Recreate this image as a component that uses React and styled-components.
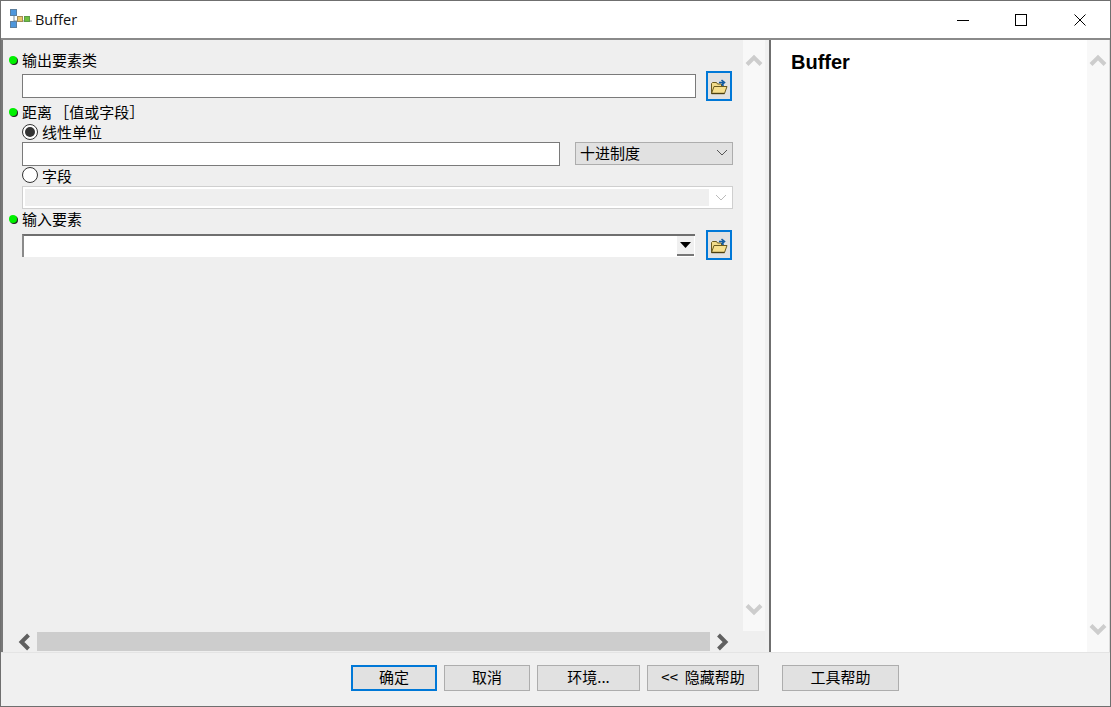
import React from 'react'
import styled, { createGlobalStyle } from 'styled-components'

const GlobalStyle = createGlobalStyle`
   html, body {
      margin: 0;
      padding: 0;
      background: #fff;
   }
   * {
      box-sizing: border-box;
   }
`

const cjk = `"Noto Sans CJK SC", "Noto Sans", sans-serif`

const Window = styled.div`
   width: 1111px;
   height: 707px;
   display: flex;
   flex-direction: column;
   background: #f0f0f0;
   border: 1px solid #6f6f6f;
   overflow: hidden;
   font-family: ${cjk};
   font-size: 15px;
   color: #000;
`

const TitleBar = styled.div`
   height: 37px;
   flex: none;
   display: flex;
   align-items: center;
   padding-left: 9px;
   background: #fff;
`

const TitleText = styled.span`
   margin-left: 3px;
   font-family: "Open Sans", "Noto Sans", sans-serif;
   font-size: 14.5px;
   color: #111;
   flex: 1;
`

const WinButton = styled.div`
   width: 58px;
   height: 37px;
   display: flex;
   align-items: center;
   justify-content: center;
   &:last-child {
      width: 59px;
      margin-right: 1px;
   }
`

const Main = styled.div`
   height: 615px;
   flex: none;
   display: flex;
   border-top: 2px solid #8a8a8a;
   border-bottom: 1px solid #e4e4e4;
   background: #f0f0f0;
`

const LeftPane = styled.div`
   width: 764px;
   flex: none;
   display: flex;
   flex-direction: column;
   border-left: 2px solid #777;
   background: #efefef;
`

const LeftTop = styled.div`
   flex: 1;
   display: flex;
   min-height: 0;
`

const Form = styled.div`
   flex: 1;
   padding: 11px 10px 0 6px;
`

const LabelRow = styled.div`
   height: 20px;
   display: flex;
   align-items: center;
   margin-top: ${p => p.$top || 0}px;
   padding-bottom: 2px;
   line-height: 20px;
   white-space: pre;
   word-spacing: -1px;
`

const Dot = styled.span`
   width: 8px;
   height: 8px;
   margin-right: 5px;
   margin-top: -1px;
   flex: none;
   border-radius: 50%;
   background: #00f000;
   box-shadow: 1px 1px 0 #222;
`

const FieldRow = styled.div`
   height: ${p => p.$h || 30}px;
   margin-left: 13px;
   display: flex;
   align-items: center;
`

const TextInput = styled.input`
   width: ${p => p.$w}px;
   height: 24px;
   flex: none;
   padding: 0 3px;
   background: #fff;
   border: 1px solid #7a7a7a;
   border-radius: 0;
   outline: none;
`

const Browse = styled.div`
   width: 26px;
   height: 30px;
   margin-left: ${p => p.$left || 10}px;
   flex: none;
   display: flex;
   align-items: center;
   justify-content: center;
   background: #e1e1e1;
   border: 2px solid #0078d7;
`

const RadioRow = styled.div`
   height: ${p => p.$h}px;
   margin-left: 13px;
   padding-bottom: 2px;
   display: flex;
   align-items: center;
   gap: 4px;
`

const RadioMark = styled.span`
   width: 16px;
   height: 16px;
   flex: none;
   display: flex;
   align-items: center;
   justify-content: center;
   border: 1px solid #333;
   border-radius: 50%;
   background: #fff;
   &::after {
      content: '';
      display: ${p => (p.$on ? 'block' : 'none')};
      width: 10px;
      height: 10px;
      border-radius: 50%;
      background: #333;
   }
`

const UnitSelect = styled.div`
   width: 158px;
   height: 23px;
   margin: 0 0 1px 15px;
   padding: 0 4px 2px 4px;
   display: flex;
   align-items: center;
   justify-content: space-between;
   background: #e1e1e1;
   border: 1px solid #adadad;
`

const DisabledSelect = styled.div`
   width: 711px;
   height: 23px;
   margin-left: 13px;
   padding: 2px 0 2px 2px;
   display: flex;
   align-items: stretch;
   background: #fff;
   border: 1px solid #cfcfcf;
`

const DisabledFill = styled.div`
   flex: 1;
   background: #efefef;
`

const DisabledArrow = styled.div`
   width: 23px;
   display: flex;
   align-items: center;
   justify-content: center;
`

const Combo = styled.div`
   width: 673px;
   height: 23px;
   flex: none;
   display: flex;
   justify-content: flex-end;
   background: #fff;
   border-top: 2px solid #6f6f6f;
   border-left: 2px solid #8a8a8a;
`

const ComboArrow = styled.div`
   width: 17px;
   height: 20px;
   margin-right: 1px;
   display: flex;
   align-items: center;
   justify-content: center;
   background: #f0f0f0;
   border-bottom: 2px solid #777;
`

const VScroll = styled.div`
   width: ${p => p.$w}px;
   flex: none;
   padding: ${p => p.$pad};
   display: flex;
   flex-direction: column;
   justify-content: space-between;
   align-items: center;
   background: #f8f8f8;
`

const HScroll = styled.div`
   height: 21px;
   flex: none;
   padding: 0 32px 0 11px;
   display: flex;
   align-items: center;
   gap: 5px;
   background: #efefef;
`

const HThumb = styled.div`
   flex: 1;
   height: 19px;
   background: #cdcdcd;
`

const RightPane = styled.div`
   flex: 1;
   display: flex;
   margin-left: 4px;
   border-left: 2px solid #6f6f6f;
   border-right: 1px solid #dcdcdc;
`

const HelpBody = styled.div`
   flex: 1;
   padding: 10px 20px;
   background: #fff;
`

const HelpTitle = styled.h1`
   margin: 0;
   font-family: "Liberation Sans", Arial, sans-serif;
   font-size: 20px;
   font-weight: 700;
   line-height: 24px;
`

const Footer = styled.div`
   flex: 1;
   padding: 12px 0 0 350px;
   display: flex;
   gap: 7px;
   background: #f0f0f0;
`

const Button = styled.div`
   width: ${p => p.$w}px;
   height: 26px;
   margin-left: ${p => p.$left || 0}px;
   padding-bottom: 4px;
   display: flex;
   align-items: center;
   justify-content: center;
   background: #e1e1e1;
   border: ${p => (p.$primary ? '2px solid #0078d7' : '1px solid #adadad')};
   white-space: pre;
`

function AppIcon() {
   return (
      <svg width="22" height="22" viewBox="0 0 22 22">
         <path d="M4 6v12M4 12h18" stroke="#7a8a96" strokeWidth="1" fill="none" />
         <rect x="0.5" y="0.5" width="6" height="6" fill="#4f97dc" stroke="#5c7f9e" />
         <rect x="0.5" y="12.5" width="6" height="6" fill="#4f97dc" stroke="#5c7f9e" />
         <rect x="7.5" y="7.5" width="5" height="5" fill="#e9c46a" stroke="#a58a55" />
         <rect x="14.5" y="7.5" width="5" height="5" fill="#6fbf3f" stroke="#5d9a48" />
      </svg>
   )
}

function FolderIcon() {
   return (
      <svg width="18" height="17" viewBox="0 0 18 17">
         <path d="M1.5 15.5V5.5L2.5 4.5H6.5L7.5 6H11.5V8" fill="#f2dc8b" stroke="#6a5a1e" />
         <path d="M1.5 15.5L4 8.5H17L14.5 15.5Z" fill="#f7e08e" stroke="#6a5a1e" />
         <path d="M1.5 15.5H14.5" stroke="#4d4010" strokeWidth="1.4" />
         <path d="M9 4.5H13M11.5 2L14.5 4.5L11.5 7M13 4.5V8" stroke="#0f5aa0" strokeWidth="1.6" fill="none" />
      </svg>
   )
}

function ThinCaret({ color }) {
   return (
      <svg width="12" height="7" viewBox="0 0 12 7">
         <path d="M1 1l5 5 5-5" stroke={color} strokeWidth="1" fill="none" />
      </svg>
   )
}

function Chevron({ dir, color }) {
   const rotate = { up: 0, down: 180, left: 270, right: 90 }[dir]
   return (
      <svg width="18" height="18" viewBox="0 0 18 18" style={{ transform: `rotate(${rotate}deg)`, flex: 'none' }}>
         <path d="M2 14.5L9 7.5l7 7" stroke={color} strokeWidth="4" fill="none" />
      </svg>
   )
}

function App() {
   return (
      <Window>
         <GlobalStyle />
         <TitleBar>
            <AppIcon />
            <TitleText>Buffer</TitleText>
            <WinButton>
               <svg width="12" height="12" viewBox="0 0 12 12">
                  <path d="M0 6.5h12" stroke="#000" />
               </svg>
            </WinButton>
            <WinButton>
               <svg width="12" height="12" viewBox="0 0 12 12">
                  <rect x="0.5" y="0.5" width="11" height="11" stroke="#000" fill="none" />
               </svg>
            </WinButton>
            <WinButton>
               <svg width="12" height="12" viewBox="0 0 12 12">
                  <path d="M0.5 0.5l11 11M11.5 0.5l-11 11" stroke="#000" />
               </svg>
            </WinButton>
         </TitleBar>
         <Main>
            <LeftPane>
               <LeftTop>
                  <Form>
                     <LabelRow><Dot />输出要素类</LabelRow>
                     <FieldRow>
                        <TextInput $w={674} />
                        <Browse><FolderIcon /></Browse>
                     </FieldRow>
                     <LabelRow $top={2}><Dot />距离 ［值或字段］</LabelRow>
                     <RadioRow $h={19}><RadioMark $on />线性单位</RadioRow>
                     <FieldRow $h={24}>
                        <TextInput $w={538} />
                        <UnitSelect>十进制度<ThinCaret color="#555" /></UnitSelect>
                     </FieldRow>
                     <RadioRow $h={20}><RadioMark />字段</RadioRow>
                     <DisabledSelect>
                        <DisabledFill />
                        <DisabledArrow><ThinCaret color="#bbb" /></DisabledArrow>
                     </DisabledSelect>
                     <LabelRow $top={1}><Dot />输入要素</LabelRow>
                     <FieldRow>
                        <Combo>
                           <ComboArrow>
                              <svg width="11" height="6" viewBox="0 0 11 6">
                                 <path d="M0 0h11L5.5 6z" fill="#000" />
                              </svg>
                           </ComboArrow>
                        </Combo>
                        <Browse $left={11}><FolderIcon /></Browse>
                     </FieldRow>
                  </Form>
                  <VScroll $w={22} $pad="10px 0 11px">
                     <Chevron dir="up" color="#cdcdcd" />
                     <Chevron dir="down" color="#cdcdcd" />
                  </VScroll>
               </LeftTop>
               <HScroll>
                  <Chevron dir="left" color="#606060" />
                  <HThumb />
                  <Chevron dir="right" color="#606060" />
               </HScroll>
            </LeftPane>
            <RightPane>
               <HelpBody>
                  <HelpTitle>Buffer</HelpTitle>
               </HelpBody>
               <VScroll $w={22} $pad="10px 0 12px">
                  <Chevron dir="up" color="#cdcdcd" />
                  <Chevron dir="down" color="#cdcdcd" />
               </VScroll>
            </RightPane>
         </Main>
         <Footer>
            <Button $w={86} $primary>确定</Button>
            <Button $w={86}>取消</Button>
            <Button $w={103}>环境...</Button>
            <Button $w={112}>{'<<  隐藏帮助'}</Button>
            <Button $w={117} $left={16}>工具帮助</Button>
         </Footer>
      </Window>
   )
}

export default App
